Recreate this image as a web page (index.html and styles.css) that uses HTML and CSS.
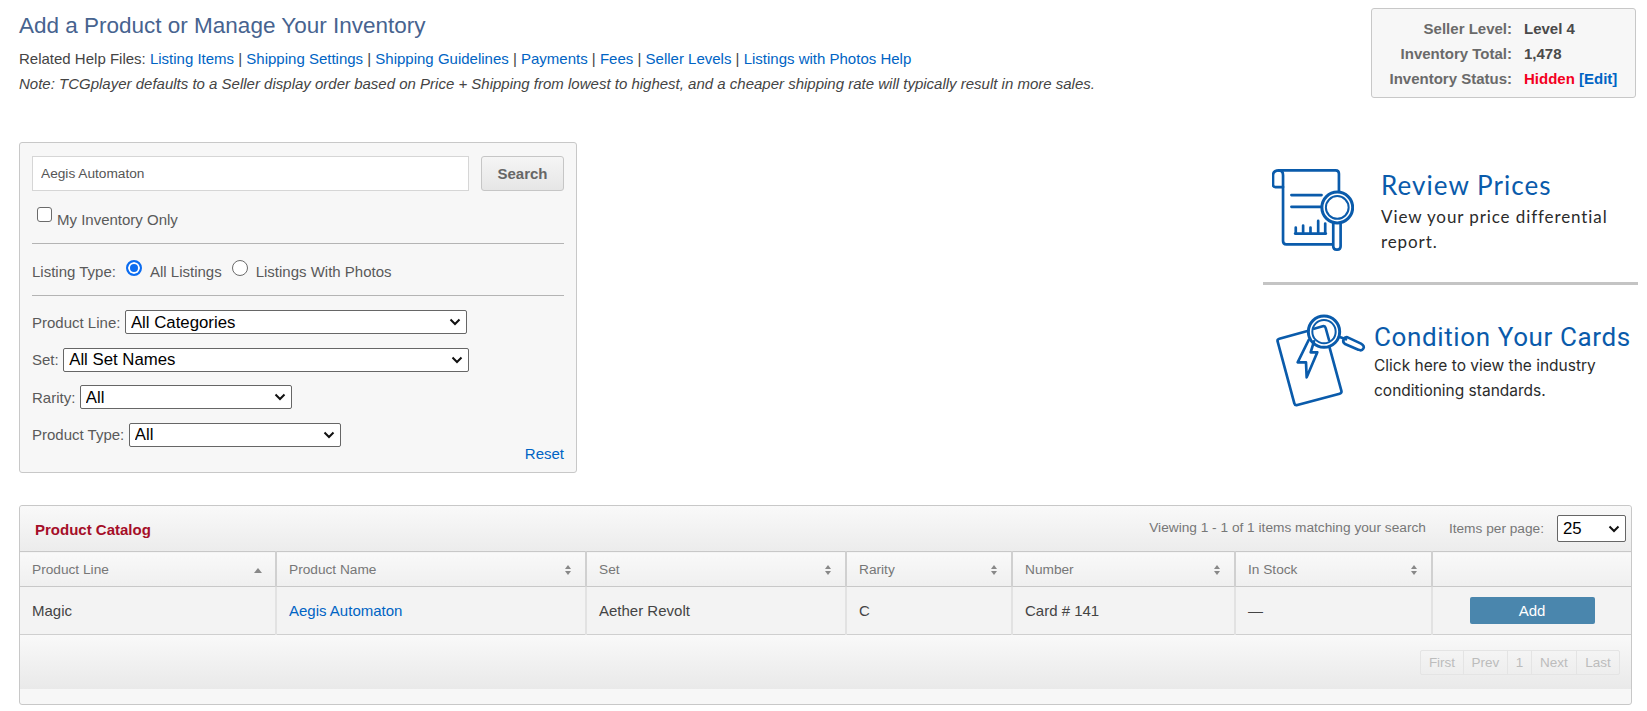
FILE: index.html
```html
<!DOCTYPE html>
<html lang="en">
<head>
<meta charset="utf-8">
<title>Add a Product or Manage Your Inventory</title>
<link rel="stylesheet" href="styles.css">
</head>
<body>
<div class="page">
  <header class="top">
    <div class="intro">
      <h1>Add a Product or Manage Your Inventory</h1>
      <p class="help">Related Help Files: <a href="#">Listing Items</a> | <a href="#">Shipping Settings</a> | <a href="#">Shipping Guidelines</a> | <a href="#">Payments</a> | <a href="#">Fees</a> | <a href="#">Seller Levels</a> | <a href="#">Listings with Photos Help</a></p>
      <p class="note">Note: TCGplayer defaults to a Seller display order based on Price + Shipping from lowest to highest, and a cheaper shipping rate will typically result in more sales.</p>
    </div>
    <dl class="seller">
      <dt>Seller Level:</dt><dd>Level 4</dd>
      <dt>Inventory Total:</dt><dd>1,478</dd>
      <dt>Inventory Status:</dt><dd><span class="hidden-status">Hidden</span> <a href="#">[Edit]</a></dd>
    </dl>
  </header>

  <section class="middle">
    <form class="search">
      <div class="search-row">
        <input class="term" type="text" value="Aegis Automaton">
        <button class="go" type="button">Search</button>
      </div>
      <label class="only"><input class="check" type="checkbox"> My Inventory Only</label>
      <div class="types">
        <span class="types-label">Listing Type:</span>
        <label><input class="radio" type="radio" name="lt" checked> All Listings</label>
        <label><input class="radio" type="radio" name="lt"> Listings With Photos</label>
      </div>
      <div class="filters">
        <label class="filter">Product Line: <select class="sel w-line"><option>All Categories</option></select></label>
        <label class="filter">Set: <select class="sel w-set"><option>All Set Names</option></select></label>
        <label class="filter">Rarity: <select class="sel w-rarity"><option>All</option></select></label>
        <label class="filter">Product Type: <select class="sel w-type"><option>All</option></select></label>
      </div>
      <a class="reset" href="#">Reset</a>
    </form>

    <aside class="promos">
      <a class="promo review" href="#">
        <svg class="icon-review" viewBox="97 57 245 245" fill="none" stroke="#0a5bab" stroke-width="8" stroke-linecap="round" stroke-linejoin="round">
          <path d="M118 61H287q10 0 10 10V125"/>
          <path d="M118 61Q100 61 100 76V104q0 7 7 7H130"/>
          <path d="M118 61q12 0 12 15V272q0 10 10 10H278"/>
          <path d="M155 135H245M155 170H245"/>
          <path d="M166 250H258M168 250V232M190 250V226M212 250V232M235 250V212M256 250V220"/>
          <circle cx="292" cy="172" r="46" stroke-width="9"/>
          <circle cx="292" cy="172" r="34" stroke-width="6"/>
          <path d="M280 220V288q0 10 10 10h2q10 0 10-10V220"/>
        </svg>
        <span class="promo-text">
          <span class="review-title">Review Prices</span>
          <span class="review-body">View your price differential report.</span>
        </span>
      </a>
      <a class="promo condition" href="#">
        <svg class="icon-condition" viewBox="108 103 270 277" fill="none" stroke="#0a5bab" stroke-width="8" stroke-linecap="round" stroke-linejoin="round">
          <path d="M205 152L118 176q-7 2-5 9L163 370q2 7 9 5L299 341q7-2 5-9L268 200"/>
          <path d="M222 146L248 139q7-2 9 5L267 180"/>
          <path d="M206 180L173 247H198L200 292L232 217H212L222 184"/>
          <circle cx="252" cy="155" r="47" stroke-width="9"/>
          <circle cx="252" cy="155" r="35" stroke-width="6"/>
          <path d="M297 170L318 178"/>
          <path d="M323 172L363 191q12 7 7 15t-15 3L315 192q-8-6-4-14t12-6z"/>
        </svg>
        <span class="promo-text">
          <span class="condition-title">Condition Your Cards</span>
          <span class="condition-body">Click here to view the industry conditioning standards.</span>
        </span>
      </a>
    </aside>
  </section>

  <section class="catalog">
    <div class="catalog-head">
      <h2>Product Catalog</h2>
      <div class="catalog-tools">
        <span class="viewing">Viewing 1 - 1 of 1 items matching your search</span>
        <label class="per-page">Items per page: <select class="sel w-page"><option>25</option></select></label>
      </div>
    </div>
    <table>
      <colgroup>
        <col class="c1"><col class="c2"><col class="c3"><col class="c4"><col class="c5"><col class="c6"><col>
      </colgroup>
      <thead>
        <tr>
          <th><span class="th-in">Product Line<svg class="sort" viewBox="0 0 10 12"><path d="M1 9L5 4l4 5z" fill="#888"/></svg></span></th>
          <th><span class="th-in">Product Name<svg class="sort" viewBox="0 0 10 12"><path d="M2 5l3-4 3 4zM2 7l3 4 3-4z" fill="#888"/></svg></span></th>
          <th><span class="th-in">Set<svg class="sort" viewBox="0 0 10 12"><path d="M2 5l3-4 3 4zM2 7l3 4 3-4z" fill="#888"/></svg></span></th>
          <th><span class="th-in">Rarity<svg class="sort" viewBox="0 0 10 12"><path d="M2 5l3-4 3 4zM2 7l3 4 3-4z" fill="#888"/></svg></span></th>
          <th><span class="th-in">Number<svg class="sort" viewBox="0 0 10 12"><path d="M2 5l3-4 3 4zM2 7l3 4 3-4z" fill="#888"/></svg></span></th>
          <th><span class="th-in">In Stock<svg class="sort" viewBox="0 0 10 12"><path d="M2 5l3-4 3 4zM2 7l3 4 3-4z" fill="#888"/></svg></span></th>
          <th></th>
        </tr>
      </thead>
      <tbody>
        <tr>
          <td>Magic</td>
          <td><a href="#">Aegis Automaton</a></td>
          <td>Aether Revolt</td>
          <td>C</td>
          <td>Card # 141</td>
          <td>—</td>
          <td class="action"><button class="add" type="button">Add</button></td>
        </tr>
      </tbody>
    </table>
    <div class="catalog-foot">
      <nav class="pager">
        <span class="p-first">First</span><span class="p-prev">Prev</span><span class="p-num">1</span><span class="p-next">Next</span><span class="p-last">Last</span>
      </nav>
    </div>
  </section>
</div>
</body>
</html>
```
FILE: styles.css
```css
* { box-sizing: border-box; }
html, body { margin: 0; padding: 0; background: #fff; }
body { font-family: "Liberation Sans", Arial, sans-serif; font-size: 15px; color: #444; }
a { color: #0064c4; text-decoration: none; }

.page { padding: 0 11px 0 19px; }

.top { display: flex; justify-content: space-between; align-items: flex-start; }
.intro { padding-top: 13px; }
h1 { margin: 0; font-size: 22.5px; line-height: 26px; font-weight: 400; color: #47638f; }
.help { margin: 7px 0 0; line-height: 25px; }
.note { margin: 0; line-height: 25px; font-style: italic; }

.seller {
  margin: 8px 0 0;
  width: 265px;
  height: 90px;
  padding: 7px 0 0;
  display: grid;
  grid-template-columns: 140px 1fr;
  grid-auto-rows: 25px;
  column-gap: 12px;
  background: #f7f7f7;
  border: 1px solid #c8c8c8;
  border-radius: 3px;
  font-weight: 700;
  line-height: 25px;
}
.seller dt { text-align: right; color: #6a6a6a; }
.seller dd { margin: 0; color: #4a4a4a; white-space: nowrap; }
.hidden-status { color: #f4001e; }

.middle { display: flex; justify-content: space-between; align-items: flex-start; margin-top: 44px; }

.search {
  position: relative;
  width: 558px;
  height: 331px;
  padding: 13px 12px 0;
  background: #f7f7f7;
  border: 1px solid #c8c8c8;
  border-radius: 3px;
  color: #5a5a5a;
}
.search-row { display: flex; justify-content: space-between; }
.term {
  width: 437px; height: 35px; padding: 0 8px;
  border: 1px solid #d6d6d6; background: #fff;
  font: 13.7px "Liberation Sans", Arial, sans-serif; color: #555;
  outline: 0;
}
.go {
  width: 83px; height: 35px; padding: 0;
  border: 1px solid #c6c6c6; border-radius: 3px;
  background: linear-gradient(#f5f5f5, #e6e6e6);
  font: 700 15px "Liberation Sans", Arial, sans-serif; color: #666;
}
.only { display: flex; align-items: center; gap: 5px; height: 38px; padding: 18px 0 0 5px; }
.check {
  appearance: none; margin: 0 0 9px; width: 15px; height: 15px;
  background: #fff; border: 1px solid #6b6b6b; border-radius: 3px;
}
.types {
  display: flex; align-items: center;
  margin-top: 14px; height: 53px;
  border-top: 1px solid #b4b4b4; border-bottom: 1px solid #b4b4b4;
  padding-top: 3px;
}
.types-label { margin-right: 10px; }
.types label { display: flex; align-items: center; gap: 8px; margin-right: 10px; }
.radio {
  appearance: none; margin: 0 0 6px; width: 16px; height: 16px;
  background: #fff; border: 1px solid #6b6b6b; border-radius: 50%;
}
.radio:checked { border: 2px solid #0b6cf0; box-shadow: inset 0 0 0 2px #fff; background: #0b6cf0; }

.filters { padding-top: 14px; }
.filter { display: flex; align-items: center; gap: 4.5px; height: 24px; margin-bottom: 13.6px; white-space: nowrap; }
.sel {
  appearance: none;
  height: 24px; padding: 0 22px 0 5px;
  background: #fff url("data:image/svg+xml,%3Csvg xmlns='http://www.w3.org/2000/svg' width='12' height='8'%3E%3Cpath d='M1.5 1.5L6 6l4.5-4.5' fill='none' stroke='%23111' stroke-width='2'/%3E%3C/svg%3E") no-repeat right 5px center;
  border: 1px solid #666; border-radius: 2px;
  font: 16.8px "Liberation Sans", Arial, sans-serif; color: #000;
}
.w-line { width: 342px; }
.w-set { width: 406px; }
.w-rarity { width: 212px; }
.w-type { width: 212px; }
.w-page { width: 69px; height: 27px; padding-left: 5px; }
.reset { position: absolute; right: 12px; bottom: 10px; line-height: 16px; }

.promos { width: 375px; margin: 27px -2px 0 0; color: #2b2b2b; }
.promo { display: flex; align-items: flex-start; color: inherit; }
.promo-text { display: block; }
.promo-text span { display: block; }
.review { padding: 0 0 28px 9px; border-bottom: 3px solid #c4c4c4; gap: 27px; }
.icon-review { width: 82px; height: 82px; flex: none; }
.review-title { font: 400 26px/32px Lato, sans-serif; letter-spacing: 1.05px; color: #0a5bab; }
.review-body { margin-top: 3px; font: 400 17px/25px Lato, sans-serif; letter-spacing: .9px; width: 240px; }
.condition { padding: 29px 0 0 13px; gap: 8px; }
.icon-condition { width: 90px; height: 93px; flex: none; }
.condition .promo-text { padding-top: 7px; }
.condition-title { font: 400 26px/32px Roboto, sans-serif; letter-spacing: .62px; color: #0a5bab; white-space: nowrap; }
.condition-body { font: 400 15.5px/25px Inter, sans-serif; width: 250px; }

.catalog {
  margin: 32px 4px 0 0;
  height: 200px;
  background: #f7f7f7;
  border: 1px solid #c8c8c8;
  border-radius: 3px;
}
.catalog-head {
  display: flex; justify-content: space-between; align-items: flex-start;
  height: 45px;
  background: linear-gradient(#f9f9f9, #ececec);
  border-radius: 3px 3px 0 0;
}
h2 { margin: 15px 0 0 15px; font-size: 15px; line-height: 18px; font-weight: 700; color: #a50e28; }
.catalog-tools { display: flex; align-items: center; gap: 23px; padding: 9px 5px 0 0; color: #777; font-size: 13.7px; }
.viewing, .per-page { line-height: 27px; }
.viewing { position: relative; top: -1px; }
.per-page { display: flex; gap: 13px; align-items: center; }

table { width: 100%; table-layout: fixed; border-collapse: collapse; }
.c1 { width: 256px; }
.c2 { width: 310px; }
.c3 { width: 260px; }
.c4 { width: 166px; }
.c5 { width: 223px; }
.c6 { width: 197px; }
th {
  height: 35px; padding: 0 12px; text-align: left; font-weight: 400; color: #777; font-size: 13.7px;
  background: linear-gradient(#f9f9f9, #efefef);
  border-top: 1px solid #c8c8c8; border-bottom: 1px solid #c8c8c8; border-right: 2px solid #d0d0d0;
}
th:last-child, td:last-child { border-right: 0; }
.th-in { display: flex; justify-content: space-between; align-items: center; }
.sort { width: 10px; height: 12px; margin-top: 1px; }
td {
  height: 48px; padding: 0 12px; color: #444;
  background: #f3f3f3;
  border-bottom: 1px solid #cfcfcf; border-right: 2px solid #e2e2e2;
}
td.action { text-align: center; padding: 0; }
.add {
  width: 125px; height: 27px; padding: 0;
  background: #4a86ad; border: 0; border-radius: 2px;
  font: 15px "Liberation Sans", Arial, sans-serif; color: #fff;
}
.catalog-foot {
  display: flex; justify-content: flex-end; align-items: flex-start;
  height: 54px; padding: 15px 11px 0 0;
  background: linear-gradient(#f9f9f9, #e9e9e9);
}
.pager { display: flex; height: 25px; border: 1px solid #e4e4e4; border-radius: 2px; color: #bcbcbc; font-size: 13.5px; line-height: 23px; }
.pager span { text-align: center; border-right: 1px solid #e4e4e4; }
.pager span:last-child { border-right: 0; }
.p-first { width: 43px; }
.p-prev { width: 44px; }
.p-num { width: 24px; }
.p-next { width: 45px; }
.p-last { width: 42px; }
```
